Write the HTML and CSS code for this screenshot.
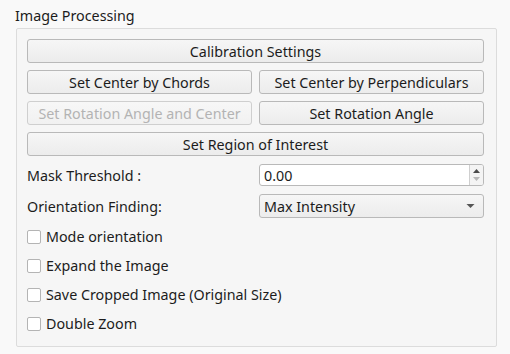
FILE: index.html
```html
<!DOCTYPE html>
<html>
<head>
<meta charset="utf-8">
<link rel="stylesheet" href="styles.css">
</head>
<body>
<div class="panel">
  <div class="title">Image Processing</div>
  <div class="frame">
    <div class="grid">
      <button class="btn span2">Calibration Settings</button>
      <button class="btn">Set Center by Chords</button>
      <button class="btn">Set Center by Perpendiculars</button>
      <button class="btn disabled">Set Rotation Angle and Center</button>
      <button class="btn">Set Rotation Angle</button>
      <button class="btn span2">Set Region of Interest</button>
      <div class="label row-spin">Mask Threshold :</div>
      <div class="spin row-spin">
        <span class="value">0.00</span>
        <span class="arrows">
          <svg width="9" height="16" viewBox="0 0 9 16"><path d="M1 6 L4.5 2 L8 6 Z" fill="#4a4a4a"/><path d="M1 10 L4.5 14 L8 10 Z" fill="#b8b8b8"/></svg>
        </span>
      </div>
      <div class="label row-combo">Orientation Finding:</div>
      <div class="combo row-combo">
        <span class="value">Max Intensity</span>
        <svg class="caret" width="9" height="6" viewBox="0 0 9 6"><path d="M0.5 1 L8.5 1 L4.5 5 Z" fill="#555"/></svg>
      </div>
    </div>
    <div class="checks">
      <label class="check"><span class="box"></span>Mode orientation</label>
      <label class="check"><span class="box"></span>Expand the Image</label>
      <label class="check"><span class="box"></span>Save Cropped Image (Original Size)</label>
      <label class="check"><span class="box"></span>Double Zoom</label>
    </div>
  </div>
</div>
</body>
</html>
```

FILE: styles.css
```css
html, body {
  margin: 0;
  padding: 0;
  background: #f9f9f9;
}
body {
  font-family: "Noto Sans", "DejaVu Sans", sans-serif;
  font-size: 14.3px;
  color: #1c1c1c;
}
.panel {
  padding: 7px 0 0 16px;
  width: 481px;
}
.title {
  height: 21px;
  line-height: 18px;
  margin-left: -1px;
}
.frame {
  box-sizing: border-box;
  width: 481px;
  height: 319px;
  border: 1px solid #dcdcdc;
  border-radius: 2px;
  background: #f6f6f6;
  padding: 10px 11px 0 10px;
}
.grid {
  display: grid;
  grid-template-columns: 225px 225px;
  column-gap: 7px;
  row-gap: 7px;
}
.span2 {
  grid-column: 1 / span 2;
}
.btn {
  box-sizing: border-box;
  height: 24px;
  margin: 0;
  padding: 0;
  font: inherit;
  color: #1c1c1c;
  border: 1px solid #b9b9b9;
  border-radius: 3px;
  background: linear-gradient(#f6f6f6, #ececec);
  white-space: nowrap;
}
.btn.disabled {
  color: #b3b3b3;
  border-color: #cfcfcf;
  background: linear-gradient(#f7f7f7, #f1f1f1);
}
.label {
  display: flex;
  align-items: center;
}
.row-spin {
  margin-top: 1px;
  height: 22px;
}
.row-combo {
  margin-top: 1px;
  height: 24px;
}
.spin {
  box-sizing: border-box;
  display: flex;
  align-items: stretch;
  border: 1px solid #b9b9b9;
  border-radius: 3px;
  background: #fff;
}
.spin .value {
  flex: 1;
  display: flex;
  align-items: center;
  padding-left: 4px;
}
.spin .arrows {
  width: 13px;
  border-left: 1px solid #cfcfcf;
  display: flex;
  align-items: center;
  justify-content: center;
  background: #f4f4f4;
  border-radius: 0 2px 2px 0;
}
.combo {
  box-sizing: border-box;
  display: flex;
  align-items: center;
  justify-content: space-between;
  border: 1px solid #b9b9b9;
  border-radius: 3px;
  background: linear-gradient(#f6f6f6, #ececec);
  padding: 0 8px 0 4px;
}
.checks {
  display: flex;
  flex-direction: column;
  margin-top: 4px;
}
.check {
  height: 29px;
  display: flex;
  align-items: center;
}
.box {
  box-sizing: border-box;
  width: 14px;
  height: 14px;
  border: 1px solid #b4b4b4;
  border-radius: 2px;
  background: #fff;
  margin-right: 5px;
}
```
